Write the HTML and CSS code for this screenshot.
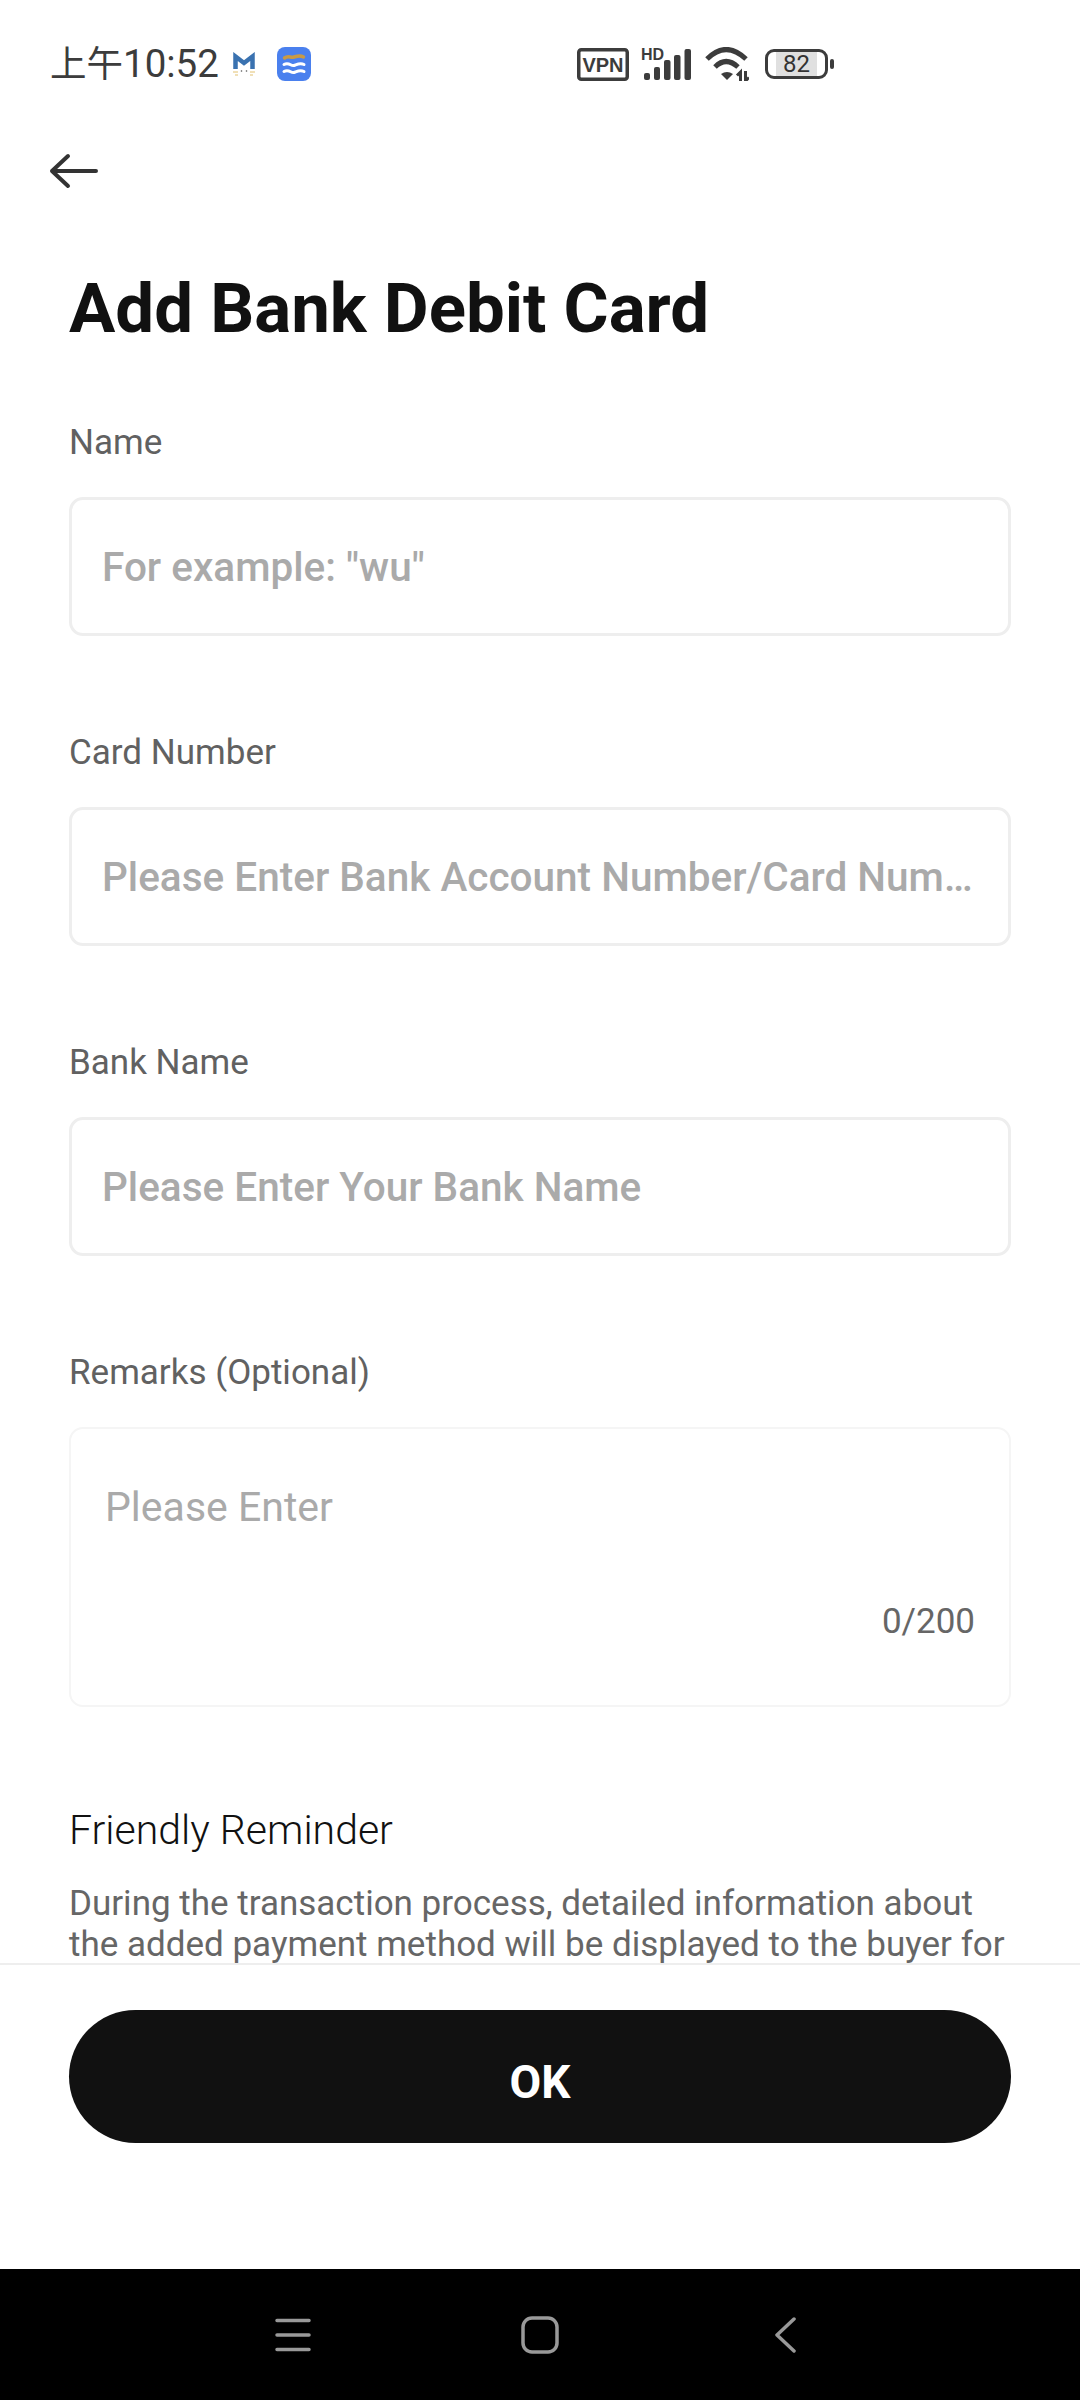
FILE: index.html
```html
<!DOCTYPE html>
<html lang="en">
<head>
<meta charset="utf-8">
<title>Add Bank Debit Card</title>
<link rel="stylesheet" href="styles.css">
</head>
<body>
<div class="page">
  <header class="status">
    <span class="time"><span class="time-cjk">上午</span>10:52</span>
    <svg class="ic-m" width="24" height="24" viewBox="0 0 24 24"><path d="M3.500 17V4.500l8.500 6.500 8.500-6.500V17" fill="none" stroke="#3a72b0" stroke-width="4.500"/><path d="M1 20h5M18 20h5M3 23h3M18 23h3" stroke="#e2c170" stroke-width="1"/><circle cx="9.500" cy="19" r=".8" fill="#555"/><circle cx="14.500" cy="19" r=".8" fill="#555"/></svg>
    <svg class="ic-app" width="34" height="34" viewBox="0 0 34 34"><rect width="34" height="34" rx="8" fill="#4a80ee"/><path d="M7.500 11c4-3 6 0 9.500-1s6-2 9.500 0" stroke="#c99a45" stroke-width="3.500" fill="none" stroke-linecap="round"/><path d="M7 17.500c5-3 7 2 10 1s6-3 10-1M7 24.500c5-3 7 2 10 1s6-3 10-1" stroke="#fff" stroke-width="3" fill="none" stroke-linecap="round"/></svg>
    <svg class="ic-vpn" width="52" height="33" viewBox="0 0 52 33"><rect x="1.750" y="1.750" width="48.500" height="29.500" rx="2.500" fill="none" stroke="#3c3c3c" stroke-width="3.500"/><text x="26" y="23.500" text-anchor="middle" class="vpn-text">VPN</text></svg>
    <svg class="ic-signal" width="50" height="32" viewBox="0 0 50 32"><text x="0" y="12" class="hd-text">HD</text><g fill="#3c3c3c"><rect x="3" y="25" width="6" height="7" rx="2"/><rect x="13" y="19" width="6" height="13" rx="2"/><rect x="23" y="12" width="6.500" height="20" rx="2"/><rect x="33" y="7" width="6.500" height="25" rx="2"/><rect x="43.500" y="1" width="6.500" height="31" rx="2"/></g></svg>
    <svg class="ic-wifi" width="45" height="34" viewBox="0 0 45 34"><g fill="none" stroke="#3c3c3c" stroke-width="5"><path d="M3 12Q22-7 42 12"/><path d="M11 20Q22 9 34 20"/></g><path d="M17 27Q23 23 29 27L23 33z" fill="#3c3c3c"/><path d="M36.500 34v-9l-3.500 3.500M41.500 24v10l3.500-3.500" stroke="#3c3c3c" stroke-width="3" fill="none"/></svg>
    <div class="battery"><span class="battery-level">82</span></div>
    <span class="battery-tip"></span>
  </header>

  <nav class="topbar">
    <svg width="50" height="36" viewBox="0 0 50 36"><path d="M47 18H3M19 3L3 18l16 15" fill="none" stroke="#333" stroke-width="4" stroke-linecap="round" stroke-linejoin="round"/></svg>
  </nav>

  <main class="content">
    <h1 class="title">Add Bank Debit Card</h1>
    <section class="field">
      <label class="label">Name</label>
      <div class="input"><span class="placeholder">For example: "wu"</span></div>
    </section>
    <section class="field">
      <label class="label">Card Number</label>
      <div class="input"><span class="placeholder">Please Enter Bank Account Number/Card Num…</span></div>
    </section>
    <section class="field">
      <label class="label">Bank Name</label>
      <div class="input"><span class="placeholder">Please Enter Your Bank Name</span></div>
    </section>
    <section class="field field-last">
      <label class="label">Remarks (Optional)</label>
      <div class="textarea">
        <span class="ta-placeholder">Please Enter</span>
        <span class="counter">0/200</span>
      </div>
    </section>
    <h2 class="reminder-title">Friendly Reminder</h2>
    <p class="reminder-text">During the transaction process, detailed information about the added payment method will be displayed to the buyer for</p>
  </main>

  <footer class="action">
    <button class="ok">OK</button>
  </footer>

  <div class="navbar">
    <svg width="40" height="36" viewBox="0 0 40 36"><path d="M4 3.500h32M4 18h32M4 32.500h32" stroke="#999" stroke-width="3.500" stroke-linecap="round"/></svg>
    <svg class="nav-home" width="38" height="38" viewBox="0 0 38 38"><rect x="2" y="2" width="34" height="34" rx="9" fill="none" stroke="#999" stroke-width="3.500"/></svg>
    <svg class="nav-back" width="24" height="36" viewBox="0 0 24 36"><path d="M21 2L4 18l17 16" fill="none" stroke="#999" stroke-width="3.500" stroke-linecap="round" stroke-linejoin="round"/></svg>
  </div>
</div>
</body>
</html>
```
FILE: styles.css
```css
* { box-sizing: border-box; }
html, body { margin: 0; padding: 0; background: #fff; }
body { font-family: Roboto, "Noto Sans CJK SC", sans-serif; }
.page { width: 1080px; height: 2400px; display: flex; flex-direction: column; overflow: hidden; }

.status { height: 128px; flex: none; display: flex; align-items: center; padding: 0 0 0 50px; color: #3c3c3c; }
.time { font-size: 38.500px; line-height: 44px; width: 167px; flex: none; white-space: nowrap; }
.time-cjk { font-size: 36.500px; }
.ic-m { margin-left: 15px; flex: none; }
.ic-app { margin-left: 21px; flex: none; }
.ic-vpn { margin-left: 266px; flex: none; }
.ic-signal { margin-left: 12px; flex: none; overflow: visible; }
.ic-wifi { margin-left: 13px; flex: none; }
.vpn-text { font: bold 20px "Liberation Sans", sans-serif; fill: #3c3c3c; }
.hd-text { font: bold 16px "Liberation Sans", sans-serif; fill: #3c3c3c; }
.battery { margin-left: 16px; width: 63px; height: 30px; border: 3px solid #3c3c3c; border-radius: 9px; display: flex; align-items: center; justify-content: center; flex: none; }
.battery-level { font-size: 24px; line-height: 24px; background: #e0e0e0; padding: 0 7px; color: #333; }
.battery-tip { width: 4px; height: 10px; border-radius: 2px; background: #3c3c3c; margin-left: 2px; flex: none; }

.topbar { height: 88px; flex: none; padding: 25px 0 0 49px; display: flex; align-items: flex-start; }

.content { flex: 1; min-height: 0; padding: 57px 69px 0; }
.title { margin: 0; font-size: 69px; line-height: 72px; font-weight: 700; color: #111; }
.field { margin-bottom: 96px; }
.field:first-of-type { margin-top: 77px; }
.field-last { margin-bottom: 100px; }
.label { display: block; font-size: 35px; line-height: 40px; padding-top: 1px; color: #616161; margin-bottom: 34px; }
.input { height: 139px; border: 3px solid #eeeeee; border-radius: 14px; display: flex; align-items: center; padding: 0 30px; }
.placeholder { font-size: 40.500px; font-weight: 500; color: #aaaaaa; white-space: nowrap; }
.textarea { height: 280px; border: 2px solid #f5f5f5; border-radius: 14px; padding: 54px 34px 0; display: flex; flex-direction: column; }
.ta-placeholder { font-size: 41px; line-height: 48px; color: #aaaaaa; }
.counter { margin-top: 71px; align-self: flex-end; font-size: 35px; line-height: 40px; color: #666; }
.reminder-title { margin: 0; font-size: 41px; line-height: 46px; font-weight: 300; color: #111; }
.reminder-text { margin: 30px 0 0; font-size: 35px; line-height: 41px; color: #666; }

.action { height: 306px; flex: none; padding: 45px 69px 0; border-top: 2px solid #eeeeee; }
.ok { width: 100%; height: 133px; border: 0; border-radius: 67px; padding: 10px 0 0; background: #111; color: #fff; font: 700 46px Roboto, sans-serif; }

.navbar { height: 131px; flex: none; background: #000; display: flex; align-items: center; padding: 0 0 0 273px; }
.nav-home { margin-left: 208px; }
.nav-back { margin-left: 214px; }
```
